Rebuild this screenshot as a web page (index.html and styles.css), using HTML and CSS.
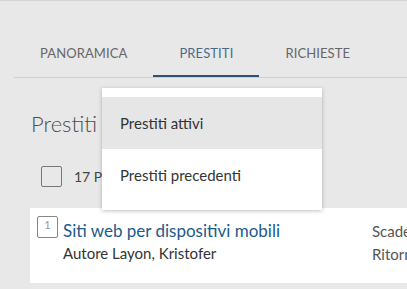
FILE: index.html
```html
<!DOCTYPE html>
<html lang="it">
<head>
   <meta charset="UTF-8">
   <meta name="viewport" content="width=device-width, initial-scale=1.0">
   <title>Prestiti</title>
   <link rel="stylesheet" href="styles.css">
</head>
<body>
   <div class="page">
      <nav class="tabs">
         <a class="tab">Panoramica</a>
         <a class="tab active">Prestiti</a>
         <a class="tab">Richieste</a>
      </nav>
      <div class="content">
         <h1 class="title">Prestiti</h1>
         <div class="select-row">
            <span class="checkbox"></span>
            <span class="count">17 Prestiti attivi</span>
         </div>
         <div class="loan-card">
            <span class="index">1</span>
            <div class="loan-info">
               <a class="loan-title">Siti web per dispositivi mobili</a>
               <div class="loan-author">Autore Layon, Kristofer</div>
            </div>
            <div class="loan-dates">
               <div>Scadenza 12/05/2024</div>
               <div>Ritorno in sede</div>
            </div>
         </div>
      </div>
      <ul class="menu">
         <li class="menu-item selected">Prestiti attivi</li>
         <li class="menu-item">Prestiti precedenti</li>
      </ul>
   </div>
</body>
</html>
```

FILE: styles.css
```css
*{
   margin: 0;
   padding: 0;
   box-sizing: border-box;
}
body{
   background: #e8e8e8;
   border-top: 1px solid #d4d4d4;
   font-family: "Lato", "Liberation Sans", sans-serif;
   color: #333;
   overflow: hidden;
}
.page{
   position: relative;
   height: 288px;
}
.tabs{
   display: flex;
   margin-left: 14px;
   border-bottom: 1px solid #d0d0d0;
}
.tab{
   padding: 42px 26px 12px;
   line-height: 20px;
   font-size: 13px;
   letter-spacing: 0.1px;
   text-transform: uppercase;
   color: #666;
   border-bottom: 2px solid transparent;
}
.tab.active{
   color: #4a6a8a;
   border-bottom-color: #2f5274;
}
.content{
   padding-left: 30px;
}
.title{
   margin-top: 32px;
   padding-left: 1px;
   font-size: 22px;
   font-weight: 300;
   line-height: 28px;
   color: #4d4d4d;
}
.select-row{
   display: flex;
   align-items: center;
   gap: 12px;
   margin: 28px 0 21px 11px;
}
.checkbox{
   flex: 0 0 21px;
   width: 21px;
   height: 21px;
   border: 1px solid #777;
   border-radius: 2px;
}
.count{
   font-size: 14px;
   color: #444;
}
.loan-card{
   display: flex;
   align-items: flex-start;
   width: 460px;
   background: #fff;
   padding: 8px 0 17px 7px;
}
.index{
   flex: 0 0 21px;
   height: 22px;
   border: 1px solid #888;
   border-radius: 2px;
   font-size: 11px;
   line-height: 16px;
   text-align: center;
   color: #999;
   margin-right: 5px;
}
.loan-info{
   flex: 0 0 309px;
   padding-top: 4px;
}
.loan-title{
   display: block;
   font-size: 17px;
   line-height: 22px;
   color: #1c5a8c;
}
.loan-author{
   font-size: 15px;
   line-height: 22px;
   color: #333;
}
.loan-dates{
   padding-top: 4px;
   font-size: 15px;
   line-height: 23px;
   color: #555;
   white-space: nowrap;
}
.menu{
   position: absolute;
   left: 102px;
   top: 87px;
   width: 220px;
   padding: 9px 0;
   list-style: none;
   background: #fff;
   box-shadow: 0 1px 4px rgba(0,0,0,0.25);
}
.menu-item{
   height: 52px;
   padding-left: 18px;
   line-height: 52px;
   font-size: 15px;
   color: #333;
}
.menu-item.selected{
   background: #e6e6e6;
}
```
